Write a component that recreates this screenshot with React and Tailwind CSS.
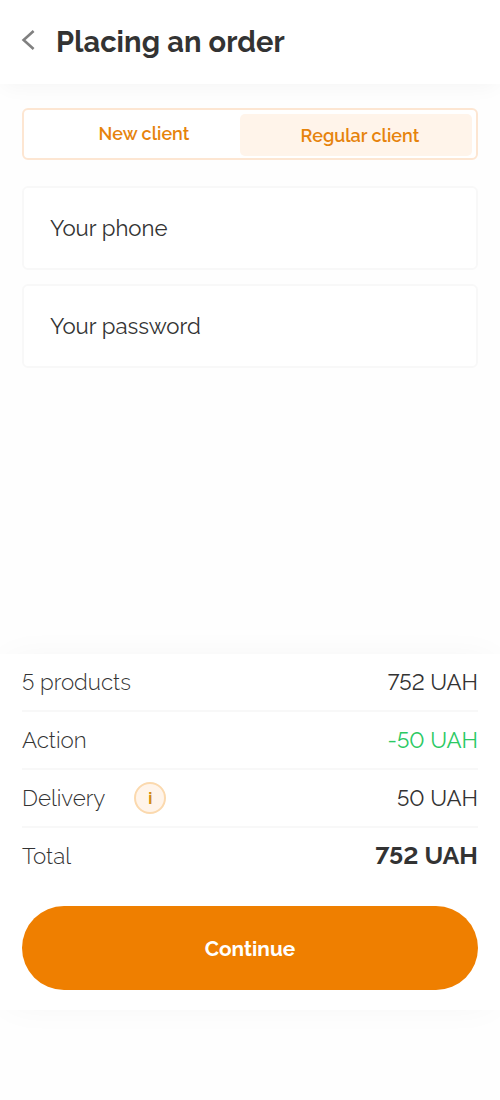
import React from "react";

const inputs = ["Your phone", "Your password"];

function Header() {
  return (
    <header className="flex h-[84px] shrink-0 items-center bg-white pl-[21px] shadow-[0_6px_20px_-4px_rgba(0,0,0,0.045)]">
      <svg className="-mt-1 h-[20px] w-[14px] shrink-0" viewBox="0 0 14 20" fill="none" stroke="#808080" strokeWidth="2.6">
        <path d="M12.6 1 L2.6 10 L12.6 19" />
      </svg>
      <h1 className="ml-[21px] text-[29px] leading-[36px] font-bold tracking-[0.08px] whitespace-nowrap">Placing an order</h1>
    </header>
  );
}

function Row({ label, value, valueStyle, info, last }) {
  return (
    <div className={last ? "flex h-[58px] items-center justify-between" : "flex h-[58px] items-center justify-between border-b-2 border-[#f8f8f8]"}>
      <div className={last ? "-mt-[2px] flex items-center" : "flex items-center"}>
        <span className="font-light">{label}</span>
        {info && (
          <span className="ml-[29px] flex h-8 w-8 items-center justify-center rounded-full border-2 border-[#fbd9ae] bg-[#fff4ea] pt-px text-[16px] leading-none font-bold text-[#d28a12]">
            i
          </span>
        )}
      </div>
      <span className={valueStyle}>{value}</span>
    </div>
  );
}

export default function App() {
  return (
    <div className="flex h-[1100px] w-[500px] flex-col overflow-hidden bg-[#fefefe] font-['Raleway','Lato',sans-serif] text-[#333333] lining-nums">
      <Header />
      <main className="flex flex-1 flex-col px-[22px] pt-6">
        <div className="flex h-[52px] rounded-[6px] border-2 border-[#fde6d2] bg-white text-[18px] leading-6 font-semibold text-[#e6830c]">
          <button className="w-[216px] pl-6">New client</button>
          <button className="mt-[4px] mb-[2px] w-[232px] rounded-[5px] bg-[#fff4ea] pt-[2px] pl-[8px]">Regular client</button>
        </div>
        <div className="mt-[26px] flex flex-col gap-[14px]">
          {inputs.map((label) => (
            <div key={label} className="flex h-[84px] items-center rounded-[6px] border-2 border-[#f8f8f8] bg-white pl-[26px] text-[22.2px] leading-7">
              {label}
            </div>
          ))}
        </div>
      </main>
      <section className="mb-[90px] h-[356px] shrink-0 bg-white px-[22px] text-[22.3px] leading-7 shadow-[0_0_36px_-8px_rgba(0,0,0,0.05)]">
        <Row label="5 products" value="752 UAH" />
        <Row label="Action" value="-50 UAH" valueStyle="text-[#2bc963]" />
        <Row label="Delivery" value="50 UAH" info />
        <Row label="Total" value="752 UAH" valueStyle="-mt-[4px] text-[25px] font-bold" last />
        <button className="mt-5 h-[84px] w-full rounded-full bg-[#ef7f00] pt-[2px] text-[20.8px] font-bold text-white">Continue</button>
      </section>
    </div>
  );
}
